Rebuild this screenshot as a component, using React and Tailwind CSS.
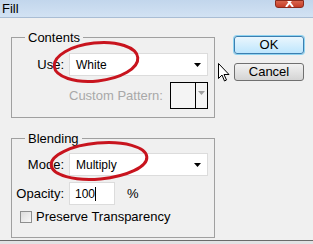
import React from "react";

function Arrow({ color = "#000" }) {
  return (
    <svg width="7" height="4" viewBox="0 0 7 4">
      <polygon points="0,0 7,0 3.5,4" fill={color} />
    </svg>
  );
}

function Select({ value }) {
  return (
    <div className="w-[139px] h-[23px] bg-white border border-[#dcdcdc] flex items-center pl-[6px] pr-[6px] text-[12px] text-black">
      <span className="flex-1">{value}</span>
      <Arrow />
    </div>
  );
}

export default function App() {
  return (
    <div
      className="relative w-[313px] h-[244px] overflow-hidden bg-[#f0f0f0] text-[12px] text-black"
      style={{ fontFamily: '"Liberation Sans", Arial, sans-serif' }}
    >
      {/* Title bar */}
      <div className="h-[18px] bg-gradient-to-b from-[#c2d6ec] to-[#d2e2f3] border-b border-[#a9bdd4] flex items-center pl-[2px] text-[13px] text-black">
        Fill
      </div>
      <div className="absolute top-0 left-[275px] w-[29px] h-[8px] bg-gradient-to-b from-[#d9644c] to-[#c43b26] border border-[#8a2a1c] rounded-b-[3px] flex justify-center overflow-hidden">
        <svg width="9" height="7" viewBox="0 0 9 7">
          <path d="M1 -3 L8 6 M8 -3 L1 6" stroke="#fff" strokeWidth="2" />
        </svg>
      </div>

      {/* Body */}
      <div className="flex pl-[11px] pt-[12px]">
        <div className="flex flex-col w-[204px]">
          {/* Contents group */}
          <fieldset className="border border-[#a0a0a0] h-[88px] px-0 pt-0 m-0 min-w-0">
            <legend className="ml-[13px] px-[3px] text-[13px] leading-[15px]">Contents</legend>
            <div className="flex items-center mt-[8px]">
              <span className="w-[53px] text-right pr-[1px] text-[13px]">Use:</span>
              <div className="ml-[4px]">
                <Select value="White" />
              </div>
            </div>
            <div className="flex items-center mt-[6px] pl-[57px] pr-[6px]">
              <span className="text-[#a8a8a8] text-[13px]">Custom Pattern:</span>
              <div className="ml-auto w-[38px] h-[27px] bg-[#f4f4f4] border border-black flex">
                <div className="flex-1 border-r border-black" />
                <div className="w-[11px] flex items-start justify-center pt-[8px]">
                  <Arrow color="#a0a0a0" />
                </div>
              </div>
            </div>
          </fieldset>

          {/* Blending group */}
          <fieldset className="mt-[13px] border border-[#a0a0a0] h-[107px] px-0 pt-0 m-0 min-w-0">
            <legend className="ml-[13px] px-[3px] text-[13px] leading-[15px]">Blending</legend>
            <div className="flex items-center mt-[7px]">
              <span className="w-[53px] text-right pr-[1px] text-[13px]">Mode:</span>
              <div className="ml-[4px]">
                <Select value="Multiply" />
              </div>
            </div>
            <div className="flex items-center mt-[6px]">
              <span className="w-[53px] text-right pr-[1px] text-[13px]">Opacity:</span>
              <div className="ml-[4px] w-[46px] h-[23px] bg-white border border-[#dcdcdc] flex items-center pl-[5px] text-[12px]">
                100<span className="inline-block w-px h-[14px] bg-black" />
              </div>
              <span className="ml-[12px] text-[13px]">%</span>
            </div>
            <div className="flex items-center mt-[2px] pl-[8px]">
              <div className="w-[12px] h-[12px] border border-[#8e8f8f] bg-gradient-to-br from-[#dcdcdc] to-[#f8f8f8]" />
              <span className="ml-[4px] text-[13px]">Preserve Transparency</span>
            </div>
          </fieldset>
        </div>

        {/* Buttons */}
        <div className="flex flex-col ml-[19px] pt-[6px] gap-[9px]">
          <div className="w-[70px] h-[18px] rounded-[3px] border border-[#3c7fb1] shadow-[0_0_0_1px_#8fd3f0] bg-gradient-to-b from-[#eaf6fd] to-[#bee6fd] flex items-center justify-center text-[13px]">
            OK
          </div>
          <div className="w-[70px] h-[18px] rounded-[3px] border border-[#707070] bg-gradient-to-b from-[#f2f2f2] to-[#d4d4d4] flex items-center justify-center text-[13px]">
            Cancel
          </div>
        </div>
      </div>

      {/* Bottom edge */}
      <div className="absolute left-0 right-0 top-[240px] h-[4px] bg-[#e2e2e4] border-t border-[#6a6a6a]" />

      {/* Cursor */}
      <svg className="absolute left-[218px] top-[63px]" width="12" height="19" viewBox="0 0 12 19">
        <path d="M0.5 0.5 L0.5 15.5 L4 12 L6.5 18 L8.5 17 L6 11.5 L11 11.5 Z" fill="#fff" stroke="#000" strokeWidth="1" strokeLinejoin="round" />
      </svg>

      {/* Red ellipses */}
      <svg className="absolute left-0 top-0 pointer-events-none" width="313" height="244">
        <ellipse cx="96" cy="62" rx="42" ry="19" fill="none" stroke="#c8141e" strokeWidth="3" transform="rotate(-6 96 62)" />
        <ellipse cx="99" cy="161" rx="48" ry="18" fill="none" stroke="#c8141e" strokeWidth="3" transform="rotate(-5 99 161)" />
      </svg>
    </div>
  );
}
